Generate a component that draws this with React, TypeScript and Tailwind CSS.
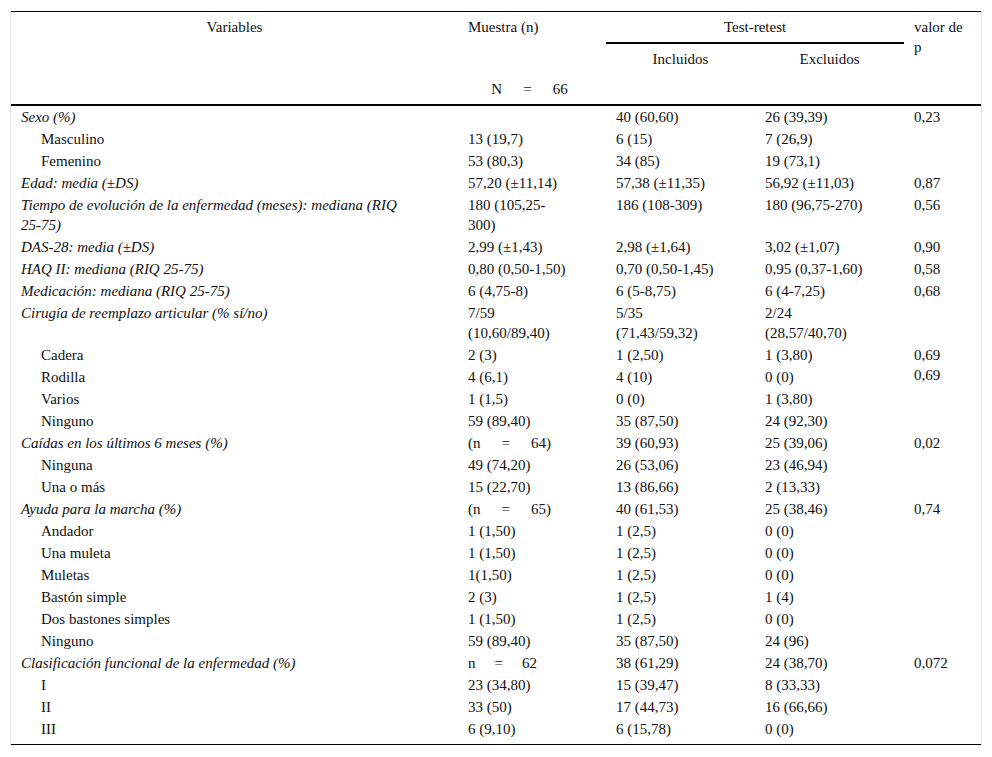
import type { ReactNode } from 'react'

type Row = {
  label: ReactNode
  italic?: boolean
  indent?: boolean
  muestra?: ReactNode
  incl?: ReactNode
  excl?: ReactNode
  p?: ReactNode
  pSpan?: number
  skipP?: boolean
}

// "n = 64" style cells have wide gaps around the equals sign
const Eq = ({ left, right, gap = 'mx-[21px]' }: { left: string; right: string; gap?: string }) => (
  <span>
    {left}
    <span className={gap}>=</span>
    {right}
  </span>
)

const ROWS: Row[] = [
  { label: 'Sexo (%)', italic: true, muestra: '', incl: '40 (60,60)', excl: '26 (39,39)', p: '0,23' },
  { label: 'Masculino', indent: true, muestra: '13 (19,7)', incl: '6 (15)', excl: '7 (26,9)' },
  { label: 'Femenino', indent: true, muestra: '53 (80,3)', incl: '34 (85)', excl: '19 (73,1)' },
  { label: 'Edad: media (±DS)', italic: true, muestra: '57,20 (±11,14)', incl: '57,38 (±11,35)', excl: '56,92 (±11,03)', p: '0,87' },
  {
    label: (
      <>
        Tiempo de evolución de la enfermedad (meses): mediana (RIQ
        <br />
        25-75)
      </>
    ),
    italic: true,
    muestra: (
      <>
        180 (105,25-
        <br />
        300)
      </>
    ),
    incl: '186 (108-309)',
    excl: '180 (96,75-270)',
    p: '0,56',
  },
  { label: 'DAS-28: media (±DS)', italic: true, muestra: '2,99 (±1,43)', incl: '2,98 (±1,64)', excl: '3,02 (±1,07)', p: '0,90' },
  { label: 'HAQ II: mediana (RIQ 25-75)', italic: true, muestra: '0,80 (0,50-1,50)', incl: '0,70 (0,50-1,45)', excl: '0,95 (0,37-1,60)', p: '0,58' },
  { label: 'Medicación: mediana (RIQ 25-75)', italic: true, muestra: '6 (4,75-8)', incl: '6 (5-8,75)', excl: '6 (4-7,25)', p: '0,68' },
  {
    label: 'Cirugía de reemplazo articular (% sí/no)',
    italic: true,
    muestra: (
      <>
        7/59
        <br />
        (10,60/89,40)
      </>
    ),
    incl: (
      <>
        5/35
        <br />
        (71,43/59,32)
      </>
    ),
    excl: (
      <>
        2/24
        <br />
        (28,57/40,70)
      </>
    ),
  },
  {
    label: 'Cadera',
    indent: true,
    muestra: '2 (3)',
    incl: '1 (2,50)',
    excl: '1 (3,80)',
    p: (
      <>
        0,69
        <br />
        0,69
      </>
    ),
    pSpan: 2,
  },
  { label: 'Rodilla', indent: true, muestra: '4 (6,1)', incl: '4 (10)', excl: '0 (0)', skipP: true },
  { label: 'Varios', indent: true, muestra: '1 (1,5)', incl: '0 (0)', excl: '1 (3,80)' },
  { label: 'Ninguno', indent: true, muestra: '59 (89,40)', incl: '35 (87,50)', excl: '24 (92,30)' },
  { label: 'Caídas en los últimos 6 meses (%)', italic: true, muestra: <Eq left="(n" right="64)" />, incl: '39 (60,93)', excl: '25 (39,06)', p: '0,02' },
  { label: 'Ninguna', indent: true, muestra: '49 (74,20)', incl: '26 (53,06)', excl: '23 (46,94)' },
  { label: 'Una o más', indent: true, muestra: '15 (22,70)', incl: '13 (86,66)', excl: '2 (13,33)' },
  { label: 'Ayuda para la marcha (%)', italic: true, muestra: <Eq left="(n" right="65)" />, incl: '40 (61,53)', excl: '25 (38,46)', p: '0,74' },
  { label: 'Andador', indent: true, muestra: '1 (1,50)', incl: '1 (2,5)', excl: '0 (0)' },
  { label: 'Una muleta', indent: true, muestra: '1 (1,50)', incl: '1 (2,5)', excl: '0 (0)' },
  { label: 'Muletas', indent: true, muestra: '1(1,50)', incl: '1 (2,5)', excl: '0 (0)' },
  { label: 'Bastón simple', indent: true, muestra: '2 (3)', incl: '1 (2,5)', excl: '1 (4)' },
  { label: 'Dos bastones simples', indent: true, muestra: '1 (1,50)', incl: '1 (2,5)', excl: '0 (0)' },
  { label: 'Ninguno', indent: true, muestra: '59 (89,40)', incl: '35 (87,50)', excl: '24 (96)' },
  {
    label: 'Clasificación funcional de la enfermedad (%)',
    italic: true,
    muestra: <Eq left="n" right="62" gap="mx-[19px]" />,
    incl: '38 (61,29)',
    excl: '24 (38,70)',
    p: '0,072',
  },
  { label: 'I', indent: true, muestra: '23 (34,80)', incl: '15 (39,47)', excl: '8 (33,33)' },
  { label: 'II', indent: true, muestra: '33 (50)', incl: '17 (44,73)', excl: '16 (66,66)' },
  { label: 'III', indent: true, muestra: '6 (9,10)', incl: '6 (15,78)', excl: '0 (0)' },
]

export default function App() {
  const cell = 'px-[10px] py-[1px] align-top text-left font-normal'

  return (
    <div className="min-h-[757px] bg-white pl-[10px] pt-[11px]">
      <div className="w-[972px] border-x border-[#e8e8e8]">
        <table className="w-[970px] table-fixed border-collapse font-['Liberation_Serif','Times_New_Roman',serif] text-[15px] leading-[20px] text-[#111]">
          <colgroup>
            <col className="w-[447px]" />
            <col className="w-[148px]" />
            <col className="w-[149px]" />
            <col className="w-[149px]" />
            <col className="w-[77px]" />
          </colgroup>
          <thead>
            <tr className="border-t border-black">
              <th rowSpan={3} className="px-[10px] pt-[5px] align-top text-center font-normal">Variables</th>
              <th rowSpan={2} className="px-[10px] pt-[5px] align-top text-left font-normal">Muestra (n)</th>
              <th colSpan={2} className="border-b-2 border-black px-[10px] py-[5px] text-center align-top font-normal">Test-retest</th>
              <th rowSpan={3} className="px-[10px] pt-[5px] align-top text-left font-normal">valor de p</th>
            </tr>
            <tr>
              <th className="px-[10px] py-[5px] text-center align-top font-normal">Incluidos</th>
              <th className="px-[10px] py-[5px] text-center align-top font-normal">Excluidos</th>
            </tr>
            <tr className="border-b-2 border-black">
              <th className="py-[5px] pl-[10px] pr-[15px] text-center align-top font-normal">
                <Eq left="N" right="66" />
              </th>
              <th className="py-[5px]" />
              <th className="py-[5px]" />
            </tr>
          </thead>
          <tbody>
            {ROWS.map((r, i) => {
              const last = i === ROWS.length - 1
              const c = last ? `${cell} pb-[5px]` : cell
              return (
                <tr key={i} className={last ? 'border-b border-black' : ''}>
                  <td className={`${c} ${r.indent ? 'pl-[30px]' : ''} ${r.italic ? 'italic' : ''}`}>{r.label}</td>
                  <td className={c}>{r.muestra}</td>
                  <td className={c}>{r.incl}</td>
                  <td className={c}>{r.excl}</td>
                  {!r.skipP && (
                    <td rowSpan={r.pSpan} className={c}>
                      {r.p}
                    </td>
                  )}
                </tr>
              )
            })}
          </tbody>
        </table>
      </div>
    </div>
  )
}
